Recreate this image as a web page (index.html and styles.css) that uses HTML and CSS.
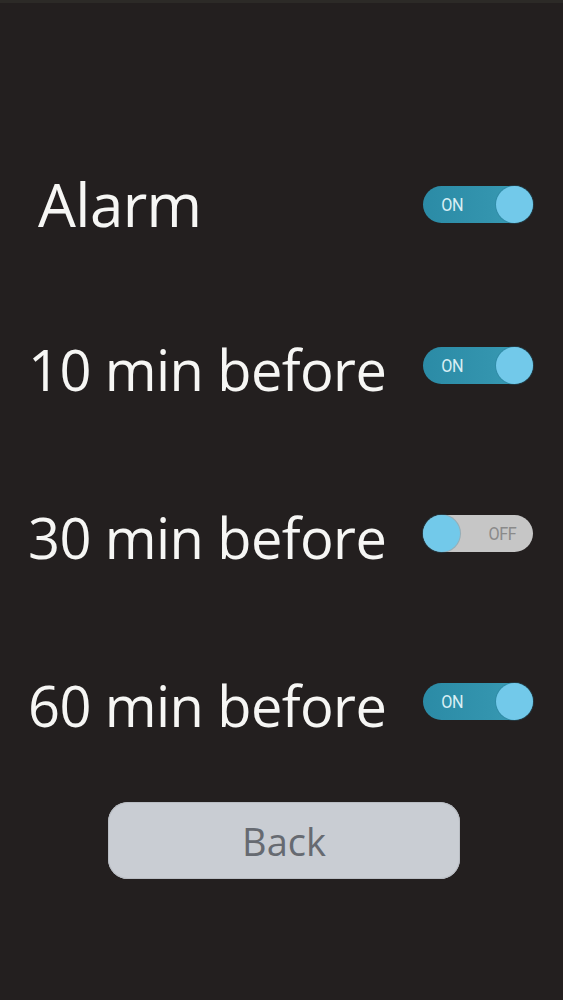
FILE: index.html
```html
<!DOCTYPE html>
<html>
<head>
<meta charset="utf-8">
<link rel="stylesheet" href="styles.css">
</head>
<body>
<div class="screen">
  <div class="row row-title">
    <span class="label label-title">Alarm</span>
    <div class="toggle on"><span class="toggle-text">ON</span><span class="knob"></span></div>
  </div>
  <div class="row">
    <span class="label">10 min before</span>
    <div class="toggle on"><span class="toggle-text">ON</span><span class="knob"></span></div>
  </div>
  <div class="row">
    <span class="label">30 min before</span>
    <div class="toggle off"><span class="knob"></span><span class="toggle-text">OFF</span></div>
  </div>
  <div class="row">
    <span class="label">60 min before</span>
    <div class="toggle on"><span class="toggle-text">ON</span><span class="knob"></span></div>
  </div>
  <div class="actions">
    <button class="back-btn">Back</button>
  </div>
</div>
</body>
</html>
```
FILE: styles.css
```css
html, body {
  margin: 0;
  padding: 0;
  background: #231f1f;
}
body {
  width: 563px;
  height: 1000px;
  font-family: "Open Sans", "Noto Sans", sans-serif;
  overflow: hidden;
}
.screen {
  padding-top: 114px;
  border-top: 3px solid #2c2a27;
  box-sizing: border-box;
  height: 1000px;
}
.row {
  height: 168px;
  display: flex;
  align-items: center;
  justify-content: space-between;
  padding: 0 30px 0 28px;
}
.label {
  color: #f6f6f4;
  font-size: 56px;
  line-height: 1;
  letter-spacing: -0.6px;
}
.label-title {
  padding-left: 10px;
  padding-top: 5px;
  font-size: 60px;
}
.toggle {
  width: 110px;
  height: 37px;
  border-radius: 19px;
  display: flex;
  align-items: center;
  box-sizing: border-box;
  margin-top: -8px;
}
.row-title .toggle {
  margin-top: 6px;
}
.toggle.on {
  background: linear-gradient(90deg, #2b8ba6 0%, #3394ae 60%, #3c9db6 100%);
  justify-content: space-between;
  padding-left: 17px;
}
.toggle.off {
  background: #c6c6c6;
  padding-right: 15px;
  justify-content: space-between;
}
.toggle-text {
  font-family: "Roboto", "Liberation Sans", sans-serif;
  font-size: 18px;
  letter-spacing: -0.5px;
  display: inline-block;
  transform: scaleX(0.9);
}
.toggle.on .toggle-text {
  color: #d9eff5;
}
.toggle.off .toggle-text {
  color: #8a8a8a;
}
.knob {
  width: 37px;
  height: 37px;
  border-radius: 50%;
  background: #72c9ea;
  box-shadow: 0 0 0 1px rgba(40, 120, 150, 0.3);
}
.actions {
  padding: 13px 0 0 108px;
}
.back-btn {
  width: 352px;
  height: 77px;
  border: none;
  border-radius: 20px;
  background: #c9cdd3;
  color: #666a71;
  font-family: "Open Sans", "Noto Sans", sans-serif;
  font-size: 38px;
  padding: 0;
  box-shadow: inset 0 0 0 1px #b8bcc2;
}
```
